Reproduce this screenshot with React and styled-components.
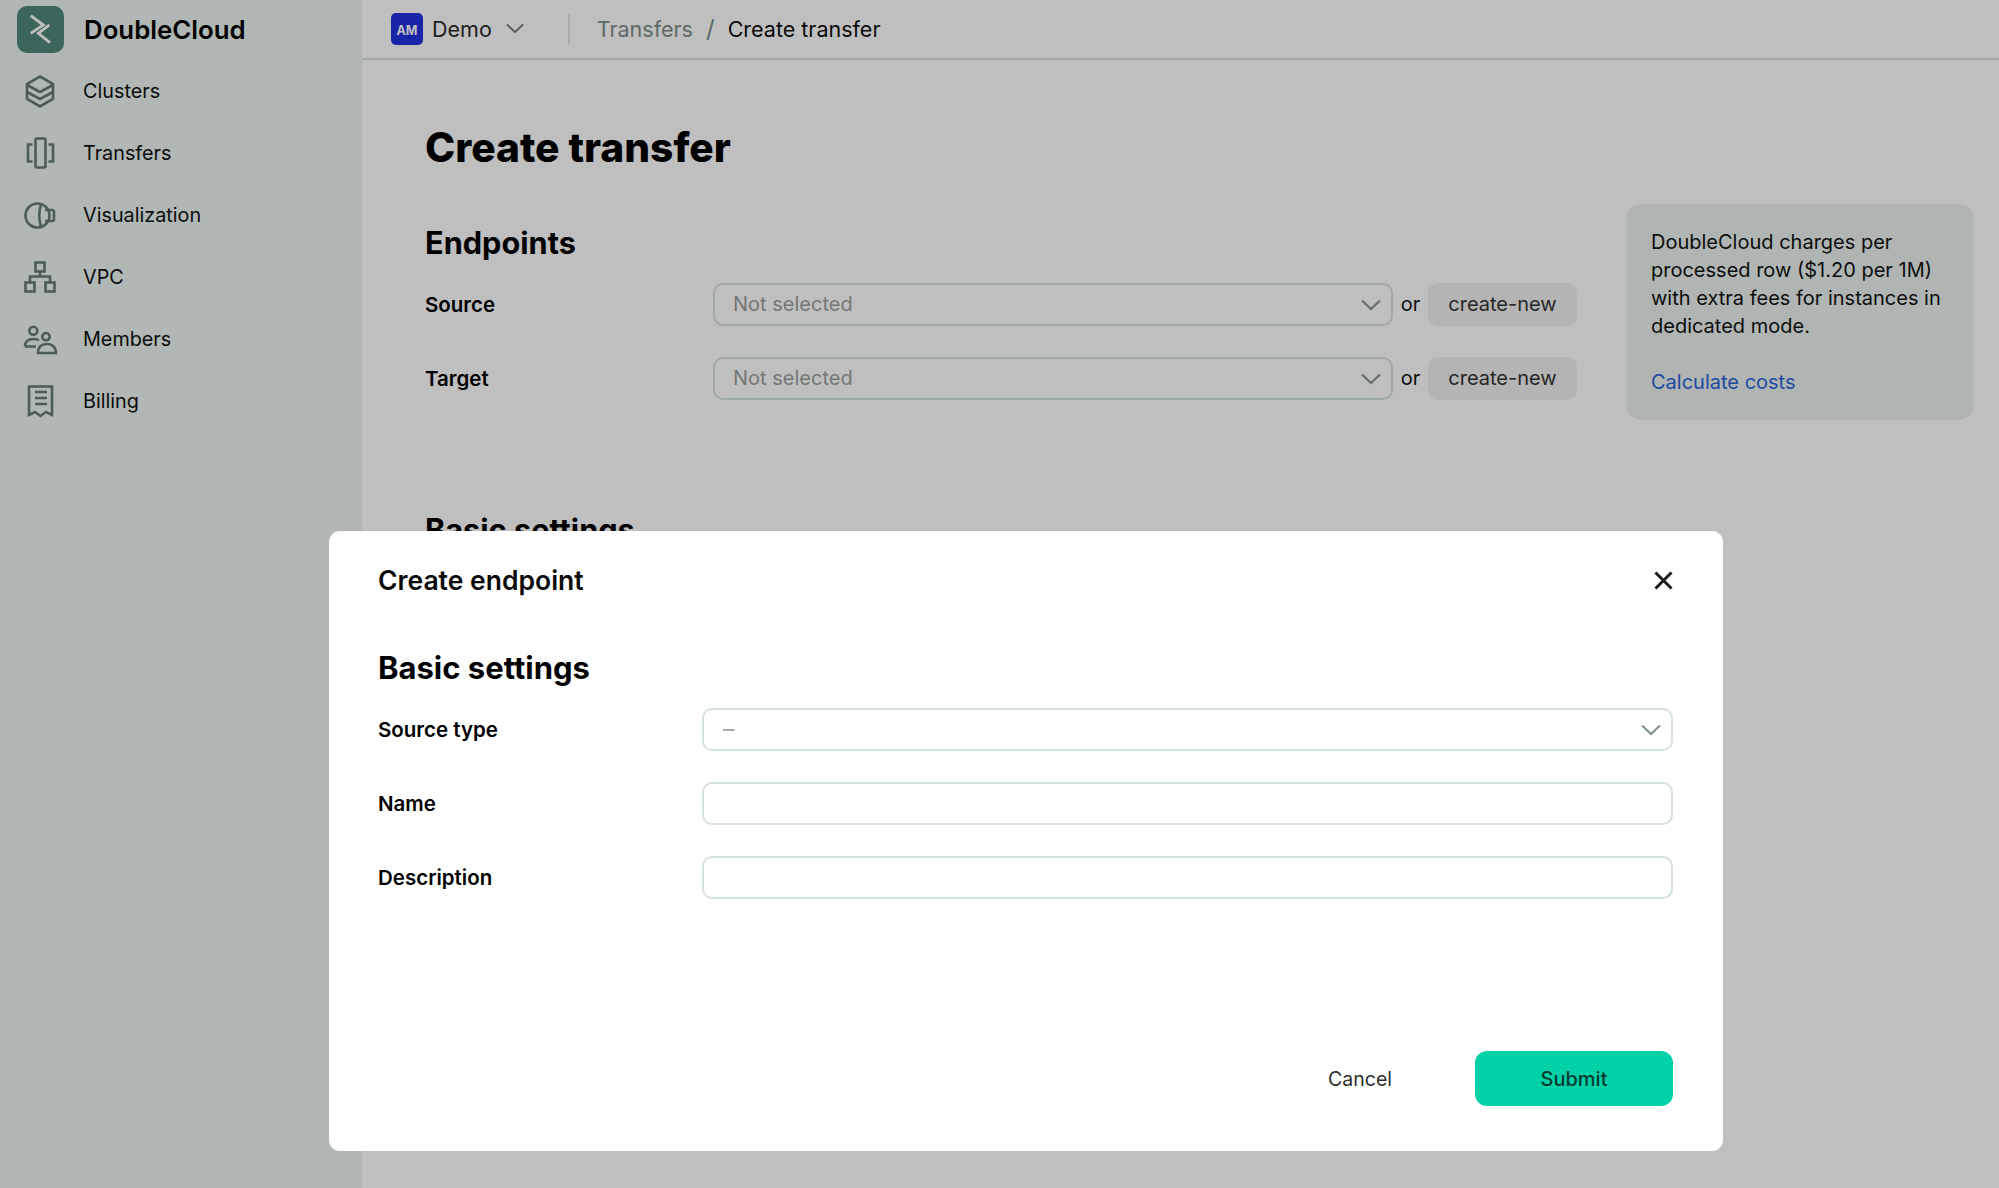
import React from "react";
import styled, { createGlobalStyle } from "styled-components";

const Global = createGlobalStyle`
  html, body { margin: 0; padding: 0; height: 100%; overflow: hidden; background: #fff; }
  * { box-sizing: border-box; }
  body { font-family: Inter, "Noto Sans", sans-serif; color: #0b0b0b; }
`;

const Shell = styled.div`
  display: flex;
  width: 1999px;
  height: 1188px;
  overflow: hidden;
`;
const Sidebar = styled.aside`
  width: 362px;
  flex: none;
  background: #ebf5f1;
  padding: 6px 0 0 17px;
`;
const Brand = styled.div`
  display: flex;
  align-items: center;
  gap: 20px;
  height: 47px;
  font-size: 25.8px;
  font-weight: 600;
  color: #000;
`;
const LogoTile = styled.div`
  width: 47px;
  height: 47px;
  border-radius: 10px;
  background: #50877a;
  display: flex;
  align-items: center;
  justify-content: center;
`;
const Nav = styled.nav`
  display: flex;
  flex-direction: column;
  margin-top: 7px;
`;
const NavItem = styled.div`
  height: 62px;
  display: flex;
  align-items: center;
  gap: 25px;
  padding-left: 5px;
  font-size: 19.8px;
  color: #101010;
  svg { width: 36px; height: 36px; flex: none; fill: none; stroke: #667c75; stroke-width: 2.6; }
`;
const Content = styled.div`
  flex: 1;
  min-width: 0;
  display: flex;
  flex-direction: column;
`;
const Header = styled.header`
  height: 60px;
  flex: none;
  display: flex;
  align-items: center;
  border-bottom: 2px solid #d6e1dd;
  padding: 0 0 1px 29px;
  font-size: 21.5px;
`;
const Avatar = styled.div`
  width: 32px;
  height: 32px;
  border-radius: 5px;
  background: #2230e0;
  color: #fff;
  font-size: 12.5px;
  font-weight: 700;
  display: flex;
  align-items: center;
  justify-content: center;
  padding-top: 3px;
`;
const Workspace = styled.span`
  margin-left: 9px;
  color: #2a2a2a;
`;
const HeaderChevron = styled.svg`
  margin-left: 14px;
  width: 18px;
  height: 11px;
  fill: none;
  stroke: #66716d;
  stroke-width: 2;
`;
const Divider = styled.div`
  width: 2px;
  height: 30px;
  background: #dde5e2;
  margin: 0 27px 0 44px;
`;
const Crumb = styled.span`
  color: ${p => (p.$current ? "#0f0f0f" : "#7c8d88")};
`;
const Slash = styled.span`
  color: #7c8d88;
  margin: 0 13px;
  font-size: 24px;
`;
const Page = styled.main`
  flex: 1;
  padding: 60px 26px 0 63px;
`;
const PageTitle = styled.h1`
  margin: 0;
  height: 56px;
  line-height: 56px;
  font-size: 40.7px;
  font-weight: 800;
  color: #000;
`;
const TopRow = styled.div`
  display: flex;
  gap: 50px;
  margin-top: 28px;
`;
const FormCol = styled.div`
  width: 1152px;
  flex: none;
  padding-top: 19px;
`;
const SectionTitle = styled.h2`
  margin: 0 0 20px;
  height: 40px;
  line-height: 40px;
  font-size: 30.7px;
  font-weight: 700;
  color: #000;
`;
const Rows = styled.div`
  display: flex;
  flex-direction: column;
  gap: 31px;
`;
const Row = styled.div`
  display: grid;
  grid-template-columns: ${p => p.$label}px 1fr;
  align-items: center;
  height: 43px;
`;
const Label = styled.label`
  font-size: 20.5px;
  font-weight: 600;
  color: #000;
  padding-bottom: 1px;
`;
const Controls = styled.div`
  display: flex;
  align-items: center;
  height: 43px;
`;
const Field = styled.div`
  flex: 1;
  height: 43px;
  border: 2px solid #d5e2dd;
  border-radius: 10px;
  background: #fff;
  display: flex;
  align-items: center;
  justify-content: space-between;
  padding: 0 10px 2px 18px;
  font-size: 20px;
  color: #9a9f9d;
`;
const Dash = styled.span`
  font-size: 23px;
  margin-left: 1px;
  color: #a8adab;
`;
const FieldChevron = styled.svg`
  width: 20px;
  height: 12px;
  margin-top: 2px;
  fill: none;
  stroke: #7f918b;
  stroke-width: 2;
`;
const Or = styled.span`
  width: 35px;
  text-align: center;
  font-size: 20px;
  color: #111;
  padding-bottom: 2px;
`;
const Ghost = styled.div`
  width: 149px;
  height: 43px;
  border-radius: 10px;
  background: #f0f0f0;
  color: #333;
  font-size: 20px;
  padding-bottom: 2px;
  display: flex;
  align-items: center;
  justify-content: center;
`;
const Card = styled.aside`
  width: 346px;
  height: 216px;
  border-radius: 14px;
  background: #ebf2ef;
  padding: 24px 20px 0 24px;
  font-size: 20px;
  line-height: 28px;
  color: #111;
`;
const CardLink = styled.a`
  display: block;
  margin-top: 28px;
  color: #2c62d9;
`;
const Behind = styled(SectionTitle)`
  margin-top: 90px;
`;
const Overlay = styled.div`
  position: fixed;
  inset: 0;
  background: rgba(0, 0, 0, 0.25);
  padding: 531px 0 0 329px;
`;
const Modal = styled.section`
  width: 1394px;
  height: 620px;
  background: #fff;
  border-radius: 11px;
  padding: 34px 50px 45px 49px;
  display: flex;
  flex-direction: column;
`;
const ModalHead = styled.div`
  height: 30px;
  display: flex;
  align-items: center;
  justify-content: space-between;
  margin-bottom: 53px;
`;
const ModalTitle = styled.h3`
  margin: 0;
  font-size: 26.5px;
  font-weight: 600;
  color: #0a0a0a;
`;
const CloseIcon = styled.svg`
  width: 19px;
  height: 19px;
  stroke: #1c1c1c;
  stroke-width: 3;
  fill: none;
`;
const ModalSection = styled(SectionTitle)`
  font-size: 31px;
`;
const Footer = styled.div`
  margin-top: auto;
  display: flex;
  align-items: center;
  justify-content: flex-end;
`;
const Cancel = styled.div`
  margin-right: 83px;
  font-size: 19.5px;
  color: #2d2d2d;
`;
const Submit = styled.div`
  width: 198px;
  height: 55px;
  border-radius: 12px;
  background: #00d1a7;
  color: #063b30;
  font-size: 20px;
  font-weight: 500;
  display: flex;
  align-items: center;
  justify-content: center;
`;

const Chevron = () => <path d="M1 1.5 L10 10 L19 1.5" />;

const icons = {
  clusters: (
    <svg viewBox="0 0 36 36">
      <path d="M18 3.5 L31 11 V26 L18 33.5 L5 26 V11 Z" />
      <path d="M5 12 L18 19 L31 12" />
      <path d="M5 19 L18 26 L31 19" />
    </svg>
  ),
  transfers: (
    <svg viewBox="0 0 36 36">
      <rect x="13.5" y="3.5" width="10" height="29" rx="1.5" />
      <path d="M10.5 9.5 H6 V26.5 H10.5" />
      <path d="M26.5 9.5 H31 V26.5 H26.5" />
    </svg>
  ),
  viz: (
    <svg viewBox="0 0 36 36">
      <circle cx="15.5" cy="18.5" r="12" />
      <path d="M19 7.5 Q15.5 18.5 19 29.5" />
      <path d="M23 13 H30 Q32 13 32 15 V22 Q32 24 30 24 H23" />
    </svg>
  ),
  vpc: (
    <svg viewBox="0 0 36 36">
      <rect x="13.5" y="3.5" width="9" height="9" />
      <rect x="3.5" y="23.5" width="9" height="9" />
      <rect x="23.5" y="23.5" width="9" height="9" />
      <path d="M18 12.5 V17.5 M8 23.5 V17.5 H28 V23.5" />
    </svg>
  ),
  members: (
    <svg viewBox="0 0 36 36">
      <circle cx="11.3" cy="9.7" r="4" />
      <circle cx="24" cy="15.7" r="3.7" />
      <path d="M3 25.5 Q3 18 11.5 18 Q15 18 17 19.5" />
      <path d="M3 25.5 H14" />
      <path d="M16 32 Q16 23 25 23 Q33.5 23 34 32 Z" />
    </svg>
  ),
  billing: (
    <svg viewBox="0 0 36 36">
      <path d="M7 3.5 H30 V32 L24 29 L18.5 33 L13 29 L7 32 Z" />
      <path d="M13 9 H25 M13 15 H25 M13 21 H25" />
    </svg>
  ),
};

const navItems = [
  ["clusters", "Clusters"],
  ["transfers", "Transfers"],
  ["viz", "Visualization"],
  ["vpc", "VPC"],
  ["members", "Members"],
  ["billing", "Billing"],
];

export default function App() {
  return (
    <>
      <Global />
      <Shell>
        <Sidebar>
          <Brand>
            <LogoTile>
              <svg width="47" height="47" viewBox="0 0 47 47" fill="none" stroke="#fff" strokeWidth="2.8">
                <path d="M13.7 9.7 L26.3 19 L13.7 27.3" />
                <path d="M33 36.7 L21.3 27.3 L32.3 19" />
              </svg>
            </LogoTile>
            DoubleCloud
          </Brand>
          <Nav>
            {navItems.map(([k, t]) => (
              <NavItem key={k}>
                {icons[k]}
                {t}
              </NavItem>
            ))}
          </Nav>
        </Sidebar>
        <Content>
          <Header>
            <Avatar>AM</Avatar>
            <Workspace>Demo</Workspace>
            <HeaderChevron viewBox="0 0 20 12"><Chevron /></HeaderChevron>
            <Divider />
            <Crumb>Transfers</Crumb>
            <Slash>/</Slash>
            <Crumb $current>Create transfer</Crumb>
          </Header>
          <Page>
            <PageTitle>Create transfer</PageTitle>
            <TopRow>
              <FormCol>
                <SectionTitle>Endpoints</SectionTitle>
                <Rows>
                  {["Source", "Target"].map(l => (
                    <Row key={l} $label={288}>
                      <Label>{l}</Label>
                      <Controls>
                        <Field>
                          Not selected
                          <FieldChevron viewBox="0 0 20 12"><Chevron /></FieldChevron>
                        </Field>
                        <Or>or</Or>
                        <Ghost>create-new</Ghost>
                      </Controls>
                    </Row>
                  ))}
                </Rows>
              </FormCol>
              <Card>
                DoubleCloud charges per processed row ($1.20 per 1M) with extra fees for instances in dedicated mode.
                <CardLink>Calculate costs</CardLink>
              </Card>
            </TopRow>
            <Behind>Basic settings</Behind>
          </Page>
        </Content>
      </Shell>
      <Overlay>
        <Modal>
          <ModalHead>
            <ModalTitle>Create endpoint</ModalTitle>
            <CloseIcon viewBox="0 0 19 19"><path d="M1.5 1.5 L17.5 17.5 M17.5 1.5 L1.5 17.5" /></CloseIcon>
          </ModalHead>
          <ModalSection>Basic settings</ModalSection>
          <Rows>
            <Row $label={324}>
              <Label>Source type</Label>
              <Controls>
                <Field>
                  <Dash>–</Dash>
                  <FieldChevron viewBox="0 0 20 12"><Chevron /></FieldChevron>
                </Field>
              </Controls>
            </Row>
            <Row $label={324}>
              <Label>Name</Label>
              <Controls><Field /></Controls>
            </Row>
            <Row $label={324}>
              <Label>Description</Label>
              <Controls><Field /></Controls>
            </Row>
          </Rows>
          <Footer>
            <Cancel>Cancel</Cancel>
            <Submit>Submit</Submit>
          </Footer>
        </Modal>
      </Overlay>
    </>
  );
}
